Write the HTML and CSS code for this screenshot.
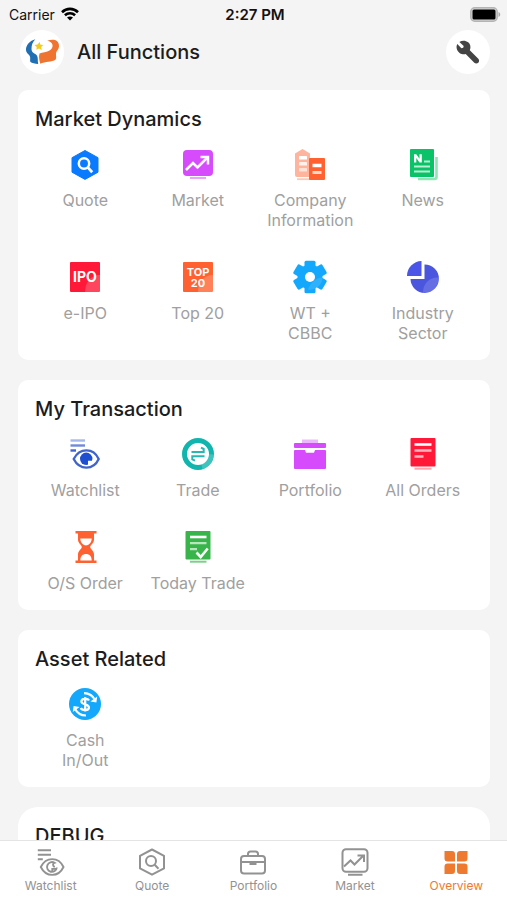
FILE: index.html
```html
<!DOCTYPE html>
<html lang="en">
<head>
<meta charset="utf-8">
<meta name="viewport" content="width=device-width, initial-scale=1">
<title>All Functions</title>
<link rel="stylesheet" href="styles.css">
</head>
<body>
<div class="status">
  <div class="status-left">
    <span>Carrier</span>
    <svg width="18" height="14" viewBox="0 0 18 14" fill="none" stroke="#000" stroke-width="2.6"><path d="M1 5.2C5.600 .8 12.400 .8 17 5.200"/><path d="M3.900 8.200C6.800 5.500 11.200 5.500 14.100 8.200"/><path d="M9 13.600 6 10.600C7.700 9 10.300 9 12 10.600Z" fill="#000" stroke="none"/></svg>
  </div>
  <time class="clock">2:27 PM</time>
  <div class="status-right">
    <svg width="31" height="15" viewBox="0 0 31 15"><rect x=".8" y=".8" width="26.400" height="13.400" rx="4" fill="#d6d6d6" stroke="#b4b4b4" stroke-width="1.500"/><rect x="2.500" y="2.500" width="23" height="10" rx="1.500" fill="#000"/><path d="M28.500 5c2.300.8 2.300 4.200 0 5z" fill="#aaa"/></svg>
  </div>
</div>

<header class="header">
  <span class="round">
    <svg width="34" height="26" viewBox="0 0 34 26"><path d="M10.300.3C5 1.800.8 6 1 11c.2 3.800 4 4.500 4.200 7.500.1 2.300-.4 3.500.3 4.600 1.500 1.300 4.500 1.700 7.700 1.900-.8-3.500.2-6.500-1.500-8.700-1.500-2-5.200-2.300-5.200-6.300C6.500 6.500 7.500 3 10.300.3Z" fill="#1f6fb2"/><path d="M22.200 1.800C27.500-.5 34.300.5 34 7.200c-.2 3.500-3 4.500-3 8 0 2 .5 3.500-.3 5.200-3.700 2.800-10.700 1.600-15.400 4.400-1-3.800-1.800-7.300-.8-10.400 3-1.500 7-.9 10.500-3.200C29.500 8.200 28 2.800 22.200 1.800Z" fill="#ef7430"/><path d="m14.600 3 .9 2.700 2.900.4-2.200 1.900.5 2.900-2.700-1.400-2.600 1.300.3-2.800L9.500 6l3.100-.4z" fill="#f3cb1c"/></svg>
  </span>
  <h1 class="page-title">All Functions</h1>
  <button class="round" type="button" aria-label="Settings">
    <svg width="24" height="24" viewBox="0 0 24 24"><path d="M3.400 1.900 7.700 6.100 7.200 7.800 5.400 8.200 1.300 4.100C-.3 7 .8 11 3.600 13c2.200 1.500 4.300 1.600 6.100 1.100l8.600 8.600c1.100 1.100 2.900 1.100 4 0s1.100-2.900 0-4l-8.500-8.400C15.100 7 14.400 4.200 12.200 2.300 9.700.4 6.200.2 3.400 1.900Z" fill="#444"/></svg>
  </button>
</header>

<main class="content">
  <section class="card">
    <h2 class="card-title">Market Dynamics</h2>
    <div class="tiles">
      <a class="tile" href="#quote">
        <svg viewBox="0 0 32 32"><path d="M16 2.500 29 9.700V24.200L16 31.400 3 24.200V9.700Z" fill="#0a7aff" stroke="#0a7aff" stroke-linejoin="round"/><circle cx="15" cy="15.500" r="5.200" fill="none" stroke="#fff" stroke-width="2.500"/><path d="m18.800 19.400 4.400 4.800" stroke="#fff" stroke-width="2.800"/></svg>
        <span>Quote</span></a>
      <a class="tile" href="#market">
        <svg viewBox="0 0 32 32"><rect x="1" y="2" width="30" height="26" rx="4" fill="#d64bfb"/><path d="M8 30h16" stroke="#e9a5fd" stroke-width="2"/><path d="m4 22 7-7 4.500 4.500L25 10" fill="none" stroke="#fff" stroke-width="2.500"/><path d="M18.500 9H26v7.500" fill="none" stroke="#fff" stroke-width="2.500"/></svg>
        <span>Market</span></a>
      <a class="tile" href="#company">
        <svg viewBox="0 0 32 32"><path d="M1 5.500 8.500 1 16 5.500V29H3q-2 0-2-2Z" fill="#ffb59d"/><path d="M3 31.200h13" stroke="#ffc8b6" stroke-width="1.800"/><g fill="#fff"><rect x="5" y="8" width="8" height="3.500" rx=".6"/><rect x="5" y="14" width="8" height="3.500" rx=".6" opacity=".8"/><rect x="5" y="20" width="8" height="3.500" rx=".6" opacity=".6"/></g><rect x="15" y="10" width="16" height="22" rx="1" fill="#ff6230"/><path d="M18.500 17.500h9" stroke="#fff" stroke-width="3.500"/><path d="M18.500 24.500h9" stroke="#ffd8cb" stroke-width="3"/></svg>
        <span>Company Information</span></a>
      <a class="tile" href="#news">
        <svg viewBox="0 0 32 32"><path d="M11 31h16.500q2 0 2-2V9" fill="none" stroke="#8ee5b5" stroke-width="2.600"/><rect x="3" y="1" width="24" height="28" rx="1" fill="#0ac267"/><path d="M7 14.500V6.200h2.300l3.200 4.600V6.200h2.300v8.300h-2.300L9.300 9.900v4.600Z" fill="#fff"/><path d="M17 13.500h6" stroke="#b8f0d1" stroke-width="2"/><path d="M7 18.500h16M7 23.500h16" stroke="#b8f0d1" stroke-width="2.200"/></svg>
        <span>News</span></a>
      <a class="tile" href="#ipo">
        <svg viewBox="0 0 32 32"><rect x="1" y="1" width="30" height="30" rx="1" fill="#ff1838"/><path d="M16 31c0-9 5-17 15-17v17Z" fill="#fff" opacity=".2"/><text x="16" y="21" class="glyph glyph-lg">IPO</text></svg>
        <span>e-IPO</span></a>
      <a class="tile" href="#top20">
        <svg viewBox="0 0 32 32"><rect x="1" y="1" width="30" height="30" rx="1" fill="#ff6230"/><path d="M16 31c0-9 5-17 15-17v17Z" fill="#fff" opacity=".2"/><text x="16" y="15" class="glyph glyph-sm">TOP</text><text x="16" y="26" class="glyph glyph-sm">20</text></svg>
        <span>Top 20</span></a>
      <a class="tile" href="#cbbc">
        <svg viewBox="0 0 32 32"><g fill="#13a8fb"><circle cx="16" cy="16" r="12.500"/><rect x="10.500" y="-.2" width="11" height="32.400" rx="1.500"/><rect x="10.500" y="-.8" width="11" height="33.600" rx="1.500" transform="rotate(60 16 16)"/><rect x="10.500" y="-.8" width="11" height="33.600" rx="1.500" transform="rotate(120 16 16)"/></g><path d="M14 28.500C17 21 22 17 28.500 16.500A12.500 12.500 0 0 1 14 28.500Z" fill="#fff" opacity=".12"/><circle cx="16" cy="16" r="5" fill="#fff"/></svg>
        <span>WT +<br>CBBC</span></a>
      <a class="tile" href="#sector">
        <svg viewBox="0 0 32 32"><path d="M14.500 0v15H0A15 15 0 0 1 14.500 0Z" fill="#4b56e8"/><path d="M17.500 3.500A14.200 14.200 0 1 1 3.500 18h14Z" fill="#4b56de"/><path d="M16 31.700C16 23 22 16 31.600 16.500A14.200 14.200 0 0 1 16 31.700Z" fill="#fff" opacity=".15"/></svg>
        <span>Industry Sector</span></a>
    </div>
  </section>

  <section class="card">
    <h2 class="card-title">My Transaction</h2>
    <div class="tiles">
      <a class="tile" href="#watchlist">
        <svg viewBox="0 0 32 32" fill="none"><path d="M1.500 2.500h14.500" stroke="#a6b7ea" stroke-width="2.400"/><path d="M1.500 7.500h14.500" stroke="#6f8ada" stroke-width="2.400"/><path d="M1.500 12.500h5.500" stroke="#3e63cc" stroke-width="2.400"/><path d="M4.700 21C10.500 9.500 24.500 9.500 29.700 21 24.500 32.500 10.500 32.500 4.700 21Z" stroke="#4164cb" stroke-width="2.300"/><circle cx="17.200" cy="20.800" r="6.200" fill="#1f4fd1"/><path d="M19 27.200v-4.500h5.300c0 2.800-2 4.500-5.300 4.500Z" fill="#fff"/></svg>
        <span>Watchlist</span></a>
      <a class="tile" href="#trade">
        <svg viewBox="0 0 32 32" fill="none"><circle cx="16" cy="16" r="13.500" stroke="#10b5ad" stroke-width="5"/><path d="M20.500 31.200A16 16 0 0 0 31.800 16.500l-4.700-.3A11 11 0 0 1 19.500 26Z" fill="#fff" opacity=".2"/><path d="M9.500 14h12.200V11L19 9.700M22.500 18.300H10.300v3L13 22.600" stroke="#27b9b1" stroke-width="2"/></svg>
        <span>Trade</span></a>
      <a class="tile" href="#portfolio">
        <svg viewBox="0 0 32 32"><path d="M8 1.500h16v3.500H8Z" fill="#ecb8fc"/><rect x="0" y="5" width="32" height="5" rx="1" fill="#d64bfb"/><path d="M1 12h10l1 2.700h8l1-2.700h10q1 0 1 1v17q0 1-1 1H1q-1 0-1-1V13q0-1 1-1Z" fill="#d64bfb"/></svg>
        <span>Portfolio</span></a>
      <a class="tile" href="#orders">
        <svg viewBox="0 0 32 32"><rect x="3.500" y="0" width="25" height="28.500" rx="1" fill="#ff1838"/><path d="M7.500 6.500h17" stroke="#fff" stroke-width="2.600"/><path d="M7.500 12.500h17M7.500 18.500h9" stroke="#ffb4be" stroke-width="2.600"/><path d="M7.500 30.700h17" stroke="#ffa3af" stroke-width="2"/></svg>
        <span>All Orders</span></a>
      <a class="tile" href="#os-order">
        <svg viewBox="0 0 32 32" fill="#ff6230"><path d="M6.500 0h21v2.500H25V8.500c0 4-3.800 5.200-3.800 7.500s3.800 3.500 3.800 7.500v6h2.500V32h-21v-2.500H9v-6c0-4 3.800-5.200 3.800-7.500S9 12.500 9 8.500v-6H6.500Z"/><path d="M11.300 7.500h11.400c0 4-3 7-5.700 7s-5.700-3-5.700-7ZM11.300 29.500c0-4.500 2.500-6.500 5.700-6.500s5.700 2 5.700 6.500Z" fill="#fff"/></svg>
        <span>O/S Order</span></a>
      <a class="tile" href="#today-trade">
        <svg viewBox="0 0 32 32" fill="none"><rect x="3.500" y="0" width="25" height="28.500" rx="1" fill="#37b54a"/><path d="M8 6h16.500" stroke="#fff" stroke-width="2.600"/><path d="M8 12.200h16.500M8 18.200h7" stroke="#b7e6be" stroke-width="2.300"/><path d="m14.500 21.500 4.200 4.500 7-8.500" stroke="#fff" stroke-width="2.600"/><path d="M8 30.700h16.500" stroke="#7bd088" stroke-width="2"/></svg>
        <span>Today Trade</span></a>
    </div>
  </section>

  <section class="card">
    <h2 class="card-title">Asset Related</h2>
    <div class="tiles">
      <a class="tile" href="#cash">
        <svg viewBox="0 0 32 32" fill="none"><circle cx="16" cy="16" r="16" fill="#13a8fb"/><g stroke="#fff" stroke-width="2.200"><path d="M20 12.500c-1-2.400-7.600-2.400-7.600 1 0 3.300 7.600 2.500 7.600 6 0 3.400-7 3.400-8.200.5M16.200 9v14.500"/><path d="M15 5.200c5.500 0 9 2.700 11.300 7.300M17 27.500c-5.500 0-9-2.700-11.300-7.300"/></g><path d="m28.200 8.500-.8 6-6-1ZM3.800 24l.8-6 6 1Z" fill="#fff"/></svg>
        <span>Cash<br>In/Out</span></a>
    </div>
  </section>

  <section class="card card-large">
    <h2 class="card-title">DEBUG</h2>
  </section>
</main>

<nav class="tabs">
  <a class="tab" href="#watchlist">
    <svg viewBox="0 0 28 28" fill="none" stroke="currentColor" stroke-width="1.900"><path d="M.8 2.200h13.200M.8 6.800h13.200M.8 11.300h5"/><path d="M3.800 19C9 8.500 21.500 8.500 26.500 19 21.500 29.500 9 29.500 3.800 19Z"/><path d="M19.800 19.500a4.900 4.900 0 1 1-2.300-4.700c-2 .6-2 3 .2 4.300M15.300 23.900v-3h4"/></svg>
    <span>Watchlist</span></a>
  <a class="tab" href="#quote">
    <svg viewBox="0 0 28 28" fill="none" stroke="currentColor" stroke-width="2" stroke-linejoin="round"><path d="M14 1.500 26 7.800V20.400L14 26.700 2 20.400V7.800Z"/><circle cx="13" cy="13" r="5"/><path d="m16.700 16.700 3.800 4"/></svg>
    <span>Quote</span></a>
  <a class="tab" href="#portfolio">
    <svg viewBox="0 0 28 28" fill="none" stroke="currentColor" stroke-width="2"><rect x="2" y="8" width="24" height="17.500" rx="3"/><path d="M9 8V6q0-2.500 2.500-2.500h5Q19 3.500 19 6v2M2 14h24M11.500 14v2h5v-2"/></svg>
    <span>Portfolio</span></a>
  <a class="tab" href="#market">
    <svg viewBox="0 0 28 28" fill="none" stroke="currentColor" stroke-width="2"><rect x="1.500" y="1.200" width="25" height="22.500" rx="3.500"/><path d="m3 18.500 6.500-6 4 4L22 8M16.500 7.500H23V14M7 26.700h14.500"/></svg>
    <span>Market</span></a>
  <a class="tab tab-active" href="#overview" aria-current="page">
    <svg viewBox="0 0 28 28" fill="currentColor"><path d="M2.500 3H10q3 0 3 3v7.500H5.500q-3 0-3-3ZM25.500 3H18q-3 0-3 3v7.500h7.500q3 0 3-3ZM2.500 26H10q3 0 3-3v-7.500H5.500q-3 0-3 3ZM25.500 26H18q-3 0-3-3v-7.500h7.500q3 0 3 3Z"/></svg>
    <span>Overview</span></a>
</nav>
</body>
</html>
```
FILE: styles.css
```css
* {
  box-sizing: border-box;
}

body {
  margin: 0;
  height: 100vh;
  display: flex;
  flex-direction: column;
  background: #f4f4f4;
  color: #1c1c1c;
  font-family: Inter, "Liberation Sans", sans-serif;
}

a {
  color: inherit;
  text-decoration: none;
}

h1,
h2 {
  margin: 0;
  font-weight: 500;
}

svg {
  display: block;
  overflow: visible;
}

.status {
  display: grid;
  grid-template-columns: 1fr auto 1fr;
  align-items: center;
  height: 28px;
  padding: 0 6px 0 9px;
  color: #111;
  font-size: 14px;
}

.status-left {
  display: flex;
  align-items: center;
  gap: 6px;
}

.status-right {
  display: flex;
  justify-content: flex-end;
}

.clock {
  font-size: 15px;
  font-weight: 600;
}

.header {
  display: flex;
  align-items: center;
  gap: 13px;
  padding: 2px 17px 16px 20px;
}

.round {
  display: flex;
  align-items: center;
  justify-content: center;
  width: 44px;
  height: 44px;
  padding: 0;
  border: 0;
  border-radius: 50%;
  background: #fff;
}

.page-title {
  flex: 1;
  font-size: 20px;
  line-height: 24px;
}

.content {
  flex: 1;
  min-height: 0;
  display: flex;
  flex-direction: column;
  gap: 20px;
  padding: 0 17px 0 18px;
  overflow-y: auto;
  scrollbar-width: none;
}

.card {
  flex: none;
  border-radius: 10px;
  background: #fff;
}

.card-large {
  border-radius: 20px;
  padding-bottom: 16px;
}

.card-title {
  padding: 17px 17px 3px;
  font-size: 20px;
  line-height: 24px;
}

.tiles {
  display: grid;
  grid-template-columns: repeat(4, 1fr);
  padding: 0 11px;
}

.tile {
  display: flex;
  flex-direction: column;
  align-items: center;
  gap: 10px;
  padding: 14px 8px 17px;
  color: #a0a0a0;
  font-size: 16px;
  line-height: 20px;
  text-align: center;
}

.tile svg {
  width: 32px;
  height: 32px;
}

.glyph {
  fill: #fff;
  font-weight: 700;
  text-anchor: middle;
}

.glyph-lg {
  font-size: 14px;
}

.glyph-sm {
  font-size: 11px;
}

.tabs {
  display: grid;
  grid-template-columns: repeat(5, 1fr);
  height: 60px;
  border-top: 1px solid #e4e4e4;
  background: #fff;
}

.tab {
  display: flex;
  flex-direction: column;
  align-items: center;
  gap: 2px;
  padding-top: 7px;
  color: #929292;
  font-size: 12px;
  line-height: 16px;
}

.tab svg {
  width: 28px;
  height: 28px;
}

.tab-active {
  color: #ee7a30;
}
```
